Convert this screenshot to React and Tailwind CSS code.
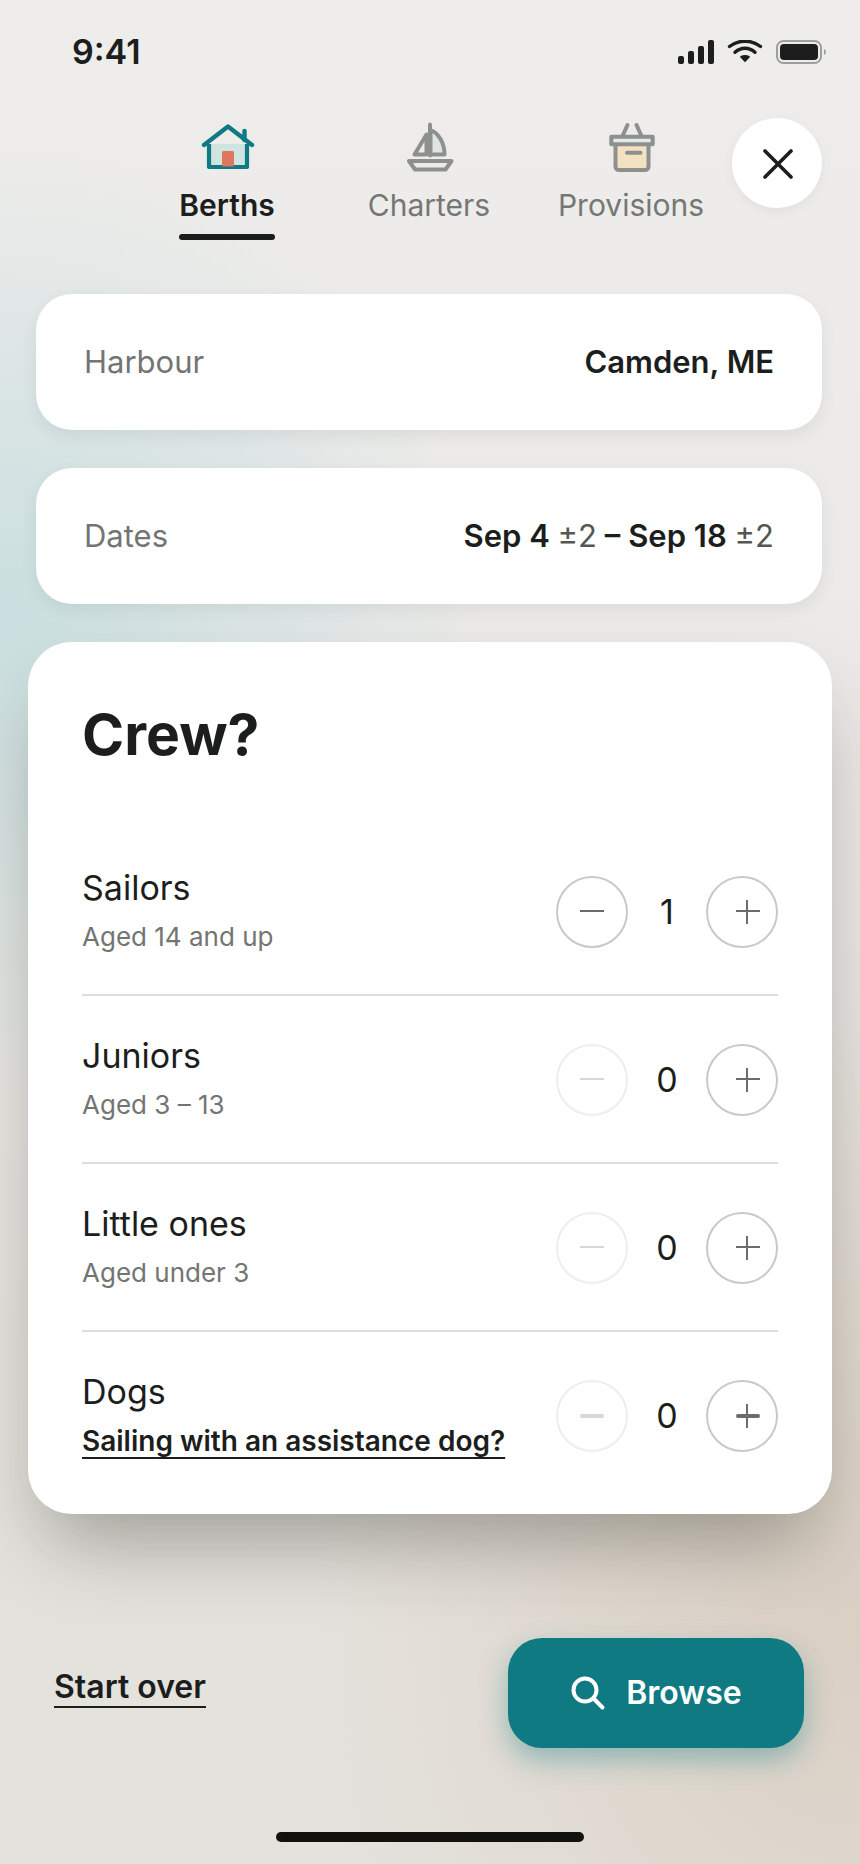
import React, { useState } from 'react';

const TABS = [
    { id: 'berths', label: 'Berths' },
    { id: 'charters', label: 'Charters' },
    { id: 'provisions', label: 'Provisions' },
];

const CREW = [
    { id: 'sailors', title: 'Sailors', note: 'Aged 14 and up' },
    { id: 'juniors', title: 'Juniors', note: 'Aged 3 – 13' },
    { id: 'little', title: 'Little ones', note: 'Aged under 3' },
    { id: 'dogs', title: 'Dogs', link: 'Sailing with an assistance dog?', heavy: true },
];

const StatusBar = () => (
    <div className="flex h-10 items-center justify-between pl-[72px] pr-[34px]">
        <span className="text-[34px] font-semibold leading-10">9:41</span>
        <svg width="148" height="24" viewBox="0 0 148 24" fill="currentColor" aria-hidden="true">
            <rect x="0" y="16" width="6" height="8" rx="2" />
            <rect x="10" y="11" width="6" height="13" rx="2" />
            <rect x="20" y="6" width="6" height="18" rx="2" />
            <rect x="30" y="0" width="6" height="24" rx="2" />
            <g fill="none" stroke="currentColor" strokeWidth="3.4" strokeLinecap="round">
                <path d="M51.5 6.5C60.5 -0.6 73.5 -0.6 82.5 6.5" />
                <path d="M57 12.3C62.8 6.8 71.2 6.8 77 12.3" />
            </g>
            <path d="M67 22.2 62.4 17.6C62 17 62.1 16.5 62.7 16.1C65.2 14.6 68.8 14.6 71.3 16.1C71.9 16.5 72 17 71.6 17.6Z" />
            <rect x="99" y="1" width="44" height="22" rx="6.5" fill="none" stroke="#9f9f9d" strokeWidth="2" />
            <rect x="102" y="4" width="38" height="16" rx="4" />
            <path d="M146 9C148.6 10.2 148.6 13.8 146 15Z" fill="#9f9f9d" />
        </svg>
    </div>
);

const TabIcon = ({ id }) => {
    if (id === 'berths') {
        return (
            <svg width="56" height="56" viewBox="-1 0 56 56" fill="none" strokeLinecap="round" strokeLinejoin="round" aria-hidden="true">
                <path d="M44.5 13V22" stroke="#0f7a82" strokeWidth="4.5" />
                <path d="M9 26H47V49H9Z" fill="#d0e4e2" />
                <path d="M9 26V49H47V26" stroke="#0f7a82" strokeWidth="4.2" strokeLinecap="butt" />
                <path d="M4 27 28 8.5 52 27" stroke="#0f7a82" strokeWidth="4.4" />
                <rect x="22" y="33" width="12" height="15.5" rx="1.5" fill="#e0765d" />
            </svg>
        );
    }
    if (id === 'charters') {
        return (
            <svg width="56" height="56" viewBox="0 0 56 56" fill="none" stroke="#8e908e" strokeWidth="4" strokeLinecap="round" strokeLinejoin="round" aria-hidden="true">
                <path d="M29.5 12C37.5 15 43.5 25 43.5 36.5H29.5Z" fill="#dee3e3" />
                <path d="M25.5 16.5V36.5H13.5Z" />
                <path d="M29 6.5V37.5" />
                <path d="M8 43H50.5L44.5 51.5H14Z" />
            </svg>
        );
    }
    return (
        <svg width="56" height="56" viewBox="0 0 56 56" fill="none" stroke="#8e908e" strokeWidth="4" strokeLinecap="round" strokeLinejoin="round" aria-hidden="true">
            <path d="M24.5 7 19.5 18M33.5 7 38.5 18" />
            <path d="M12.5 26V48.5A3.5 3.5 0 0 0 16 52H42A3.5 3.5 0 0 0 45.5 48.5V26Z" fill="#f3e1c1" />
            <rect x="8.3" y="18.7" width="41.4" height="7.6" fill="#e3e8e8" />
            <path d="M24 34.7H37.5" />
        </svg>
    );
};

const SummaryCard = ({ label, children }) => (
    <button
        type="button"
        className="flex h-[136px] w-full cursor-pointer items-center justify-between rounded-[36px] bg-white px-12 text-[31px] leading-10 shadow-[0_6px_16px_rgba(40,50,45,0.08)]"
    >
        <span className="text-[#737573]">{label}</span>
        <span className="font-semibold">{children}</span>
    </button>
);

const StepButton = ({ kind, heavy, ...props }) => (
    <button
        type="button"
        className="size-[72px] shrink-0 cursor-pointer rounded-full border-2 border-[#c8c9c8] text-[#6b6c6b] disabled:cursor-default disabled:border-[#eeeeee] disabled:text-[#d6d7d6]"
        {...props}
    >
        <svg width="68" height="68" viewBox="0 0 68 68" fill="currentColor" aria-hidden="true">
            <rect x={kind === 'plus' ? 28 : 22} y="32" width="24" height={heavy ? 4 : 2} rx={heavy ? 2 : 0} />
            {kind === 'plus' && <rect x="38" y="22" width="2" height="24" />}
        </svg>
    </button>
);

const CrewRow = ({ row, count, onChange }) => (
    <li className="flex items-center justify-between border-b-2 border-[#dcdddc] pb-[38px] pt-10 last:border-b-0">
        <div>
            <h3 className="text-[34px] leading-10">{row.title}</h3>
            {row.link ? (
                <a
                    href="#assistance"
                    className="mt-2.5 block text-[28px] font-semibold leading-[38px] underline decoration-2 underline-offset-[6px] [text-decoration-skip-ink:none]"
                >
                    {row.link}
                </a>
            ) : (
                <p className="mt-2.5 text-[26px] leading-[38px] text-[#737573]">{row.note}</p>
            )}
        </div>
        <div className="flex items-center">
            <StepButton
                kind="minus"
                heavy={row.heavy}
                aria-label={`Fewer ${row.title}`}
                disabled={count === 0}
                onClick={() => onChange(count - 1)}
            />
            <span className="w-[78px] text-center text-[34px] leading-10">{count}</span>
            <StepButton
                kind="plus"
                heavy={row.heavy}
                aria-label={`More ${row.title}`}
                onClick={() => onChange(count + 1)}
            />
        </div>
    </li>
);

const App = () => {
    const [tab, setTab] = useState('berths');
    const [counts, setCounts] = useState({ sailors: 1, juniors: 0, little: 0, dogs: 0 });

    return (
        <div className="min-h-screen bg-[radial-gradient(56%_25%_at_0%_33%,#c9dfdf_0%,#c9dfdf00_100%),radial-gradient(64%_34%_at_100%_87%,#dacfc3_0%,#dacfc300_100%),linear-gradient(180deg,#eeedeb_0%,#ebeae8_35%,#e5e2dd_75%,#e4e2dd_100%)] pb-[22px] pt-8 font-['Inter',sans-serif] text-[#1c1e1d]">
            <StatusBar />

            <header className="mt-[46px] flex items-start pl-[126px] pr-[38px]">
                <nav className="grid flex-1 grid-cols-3">
                    {TABS.map(({ id, label }) => (
                        <button
                            key={id}
                            type="button"
                            aria-pressed={tab === id}
                            onClick={() => setTab(id)}
                            className="flex cursor-pointer flex-col items-center"
                        >
                            <TabIcon id={id} />
                            <span className={`mt-3 text-[30px] leading-[38px] ${tab === id ? 'font-semibold' : 'text-[#757775]'}`}>
                                {label}
                                <span className={`mt-2.5 block h-1.5 rounded-full ${tab === id ? 'bg-[#1c1e1d]' : ''}`} />
                            </span>
                        </button>
                    ))}
                </nav>
                <button
                    type="button"
                    aria-label="Close"
                    className="flex size-[90px] cursor-pointer items-center justify-center rounded-full bg-white shadow-[0_4px_12px_rgba(0,0,0,0.05)]"
                >
                    <svg width="32" height="32" viewBox="0 0 32 32" fill="none" stroke="currentColor" strokeWidth="3.6" strokeLinecap="round" aria-hidden="true">
                        <path d="M4 4 30 30M30 4 4 30" />
                    </svg>
                </button>
            </header>

            <main>
                <div className="mt-[54px] flex flex-col gap-[38px] pl-9 pr-[38px]">
                    <SummaryCard label="Harbour">Camden, ME</SummaryCard>
                    <SummaryCard label="Dates">
                        Sep 4 <span className="font-normal text-[#555755]">±2</span> – Sep 18{' '}
                        <span className="font-normal text-[#555755]">±2</span>
                    </SummaryCard>
                </div>

                <section className="mx-7 mt-[38px] rounded-[44px] bg-white px-[54px] pb-4 pt-16 shadow-[0_44px_80px_-18px_rgba(40,42,32,0.38)]">
                    <h2 className="text-[57px] font-bold leading-[58px]">Crew?</h2>
                    <ul className="mt-16">
                        {CREW.map((row) => (
                            <CrewRow
                                key={row.id}
                                row={row}
                                count={counts[row.id]}
                                onChange={(n) => setCounts({ ...counts, [row.id]: n })}
                            />
                        ))}
                    </ul>
                </section>
            </main>

            <footer className="mt-[124px]">
                <div className="flex items-center justify-between pl-[54px] pr-14">
                    <button
                        type="button"
                        onClick={() => setCounts({ sailors: 1, juniors: 0, little: 0, dogs: 0 })}
                        className="mb-3 cursor-pointer text-[32px] font-semibold leading-10 underline decoration-2 underline-offset-8"
                    >
                        Start over
                    </button>
                    <button
                        type="button"
                        className="flex h-[110px] w-[296px] cursor-pointer items-center justify-center gap-5 rounded-[34px] bg-[#0f7a82] text-[32px] font-semibold leading-10 text-white shadow-[0_12px_28px_rgba(15,122,130,0.38)]"
                    >
                        <svg width="36" height="36" viewBox="0 0 36 36" fill="none" stroke="currentColor" strokeWidth="4" strokeLinecap="round" aria-hidden="true">
                            <circle cx="15" cy="15" r="11.5" />
                            <path d="M23.5 23.5 32.5 32.5" />
                        </svg>
                        Browse
                    </button>
                </div>
                <div className="mx-auto mt-[84px] h-2.5 w-[308px] rounded-full bg-[#13110d]" />
            </footer>
        </div>
    );
};

export default App;
